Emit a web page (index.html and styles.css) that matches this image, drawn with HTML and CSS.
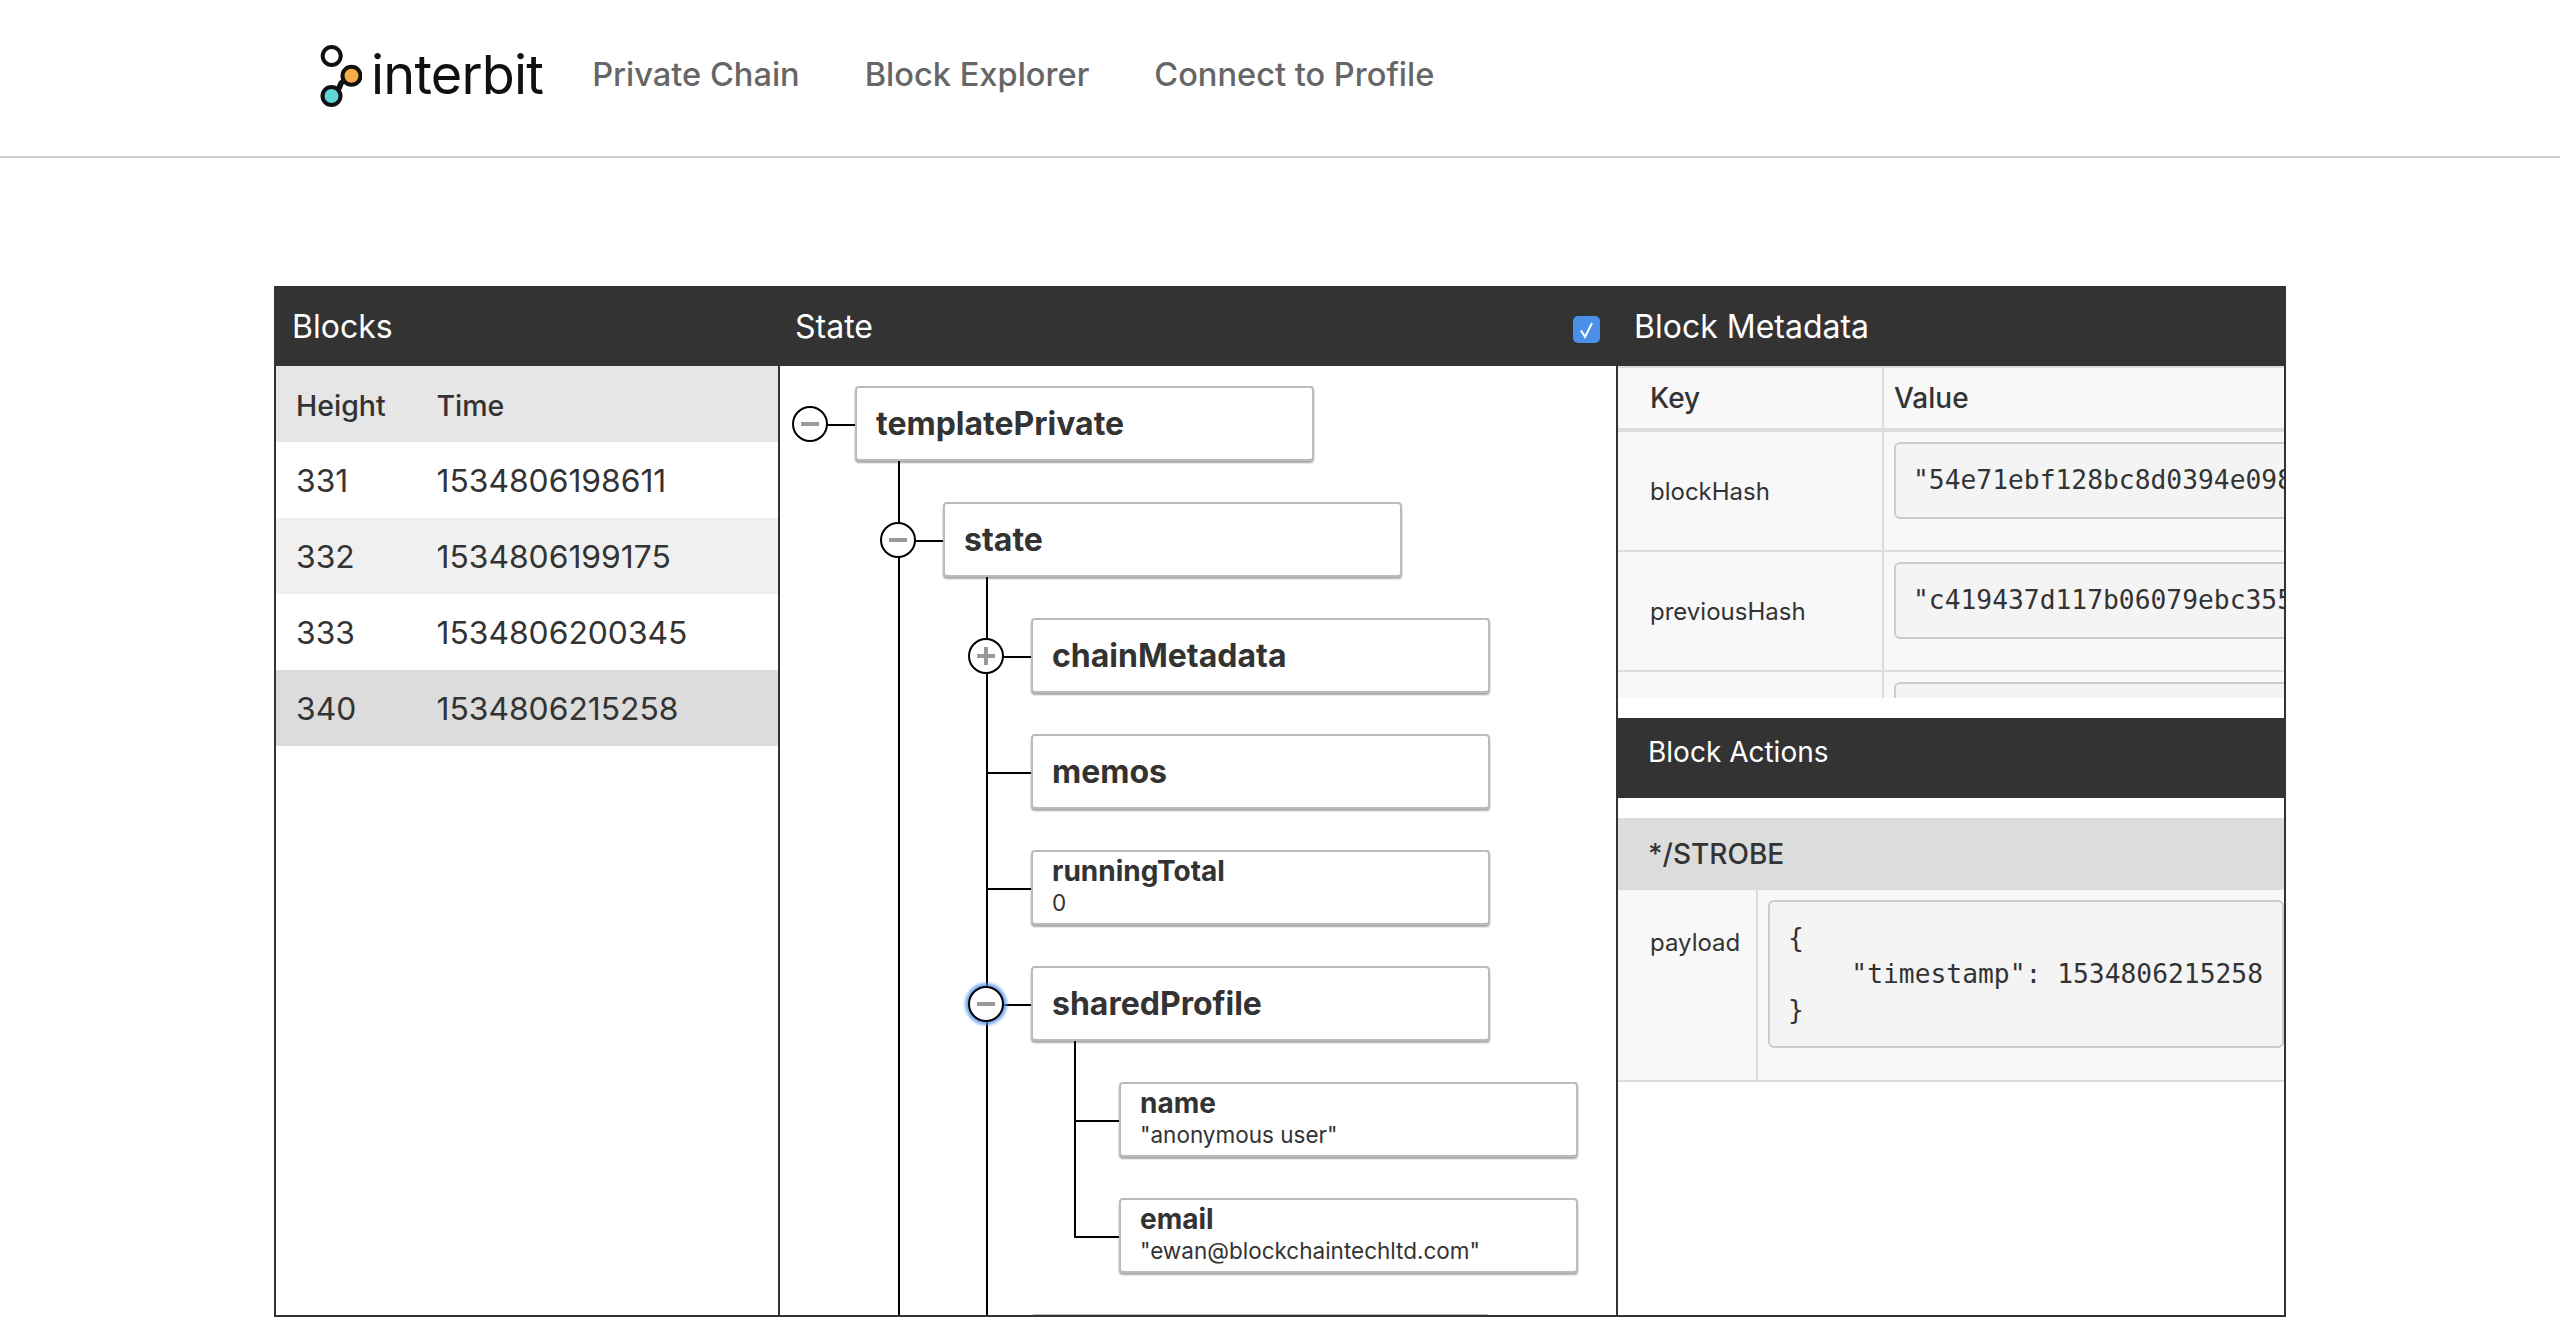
FILE: index.html
```html
<!DOCTYPE html>
<html lang="en">
<head>
<meta charset="utf-8">
<title>Interbit Block Explorer</title>
<link rel="stylesheet" href="styles.css">
</head>
<body>
<header class="topbar">
  <a class="logo">
    <svg class="logo-mark" width="44" height="68" viewBox="0 0 44 68" aria-hidden="true">
      <path d="M26 37 C20 39 24 44 18 47" fill="none" stroke="#111" stroke-width="5.5"/>
      <circle cx="13.7" cy="12" r="9" fill="#fff" stroke="#111" stroke-width="4"/>
      <circle cx="33.5" cy="31.8" r="9" fill="#f5ae45" stroke="#111" stroke-width="4"/>
      <circle cx="13.5" cy="52" r="9" fill="#5fd5d6" stroke="#111" stroke-width="4"/>
    </svg>
    <span class="logo-word">interbit</span>
  </a>
  <nav class="nav">
    <a class="nav-link">Private Chain</a>
    <a class="nav-link">Block Explorer</a>
    <a class="nav-link">Connect to Profile</a>
  </nav>
</header>

<main class="panel">
  <section class="col col-blocks">
    <h2 class="col-title">Blocks</h2>
    <div class="blocks">
      <div class="block-row block-head"><span>Height</span><span>Time</span></div>
      <div class="block-row"><span>331</span><span>1534806198611</span></div>
      <div class="block-row block-alt"><span>332</span><span>1534806199175</span></div>
      <div class="block-row"><span>333</span><span>1534806200345</span></div>
      <div class="block-row block-selected"><span>340</span><span>1534806215258</span></div>
    </div>
  </section>

  <section class="col col-state">
    <div class="col-title state-title">
      <h2 class="title-text">State</h2>
      <span class="checkbox">
        <svg width="27" height="27" viewBox="0 0 27 27" aria-hidden="true"><path d="M8 14.5 L12 21 L19 7" fill="none" stroke="#fff" stroke-width="2"/></svg>
      </span>
    </div>
    <div class="tree">
      <div class="branch">
        <div class="node"><span class="toggle minus"></span><b class="node-name">templatePrivate</b></div>
        <div class="children open-end">
          <div class="branch">
            <div class="node"><span class="toggle minus"></span><b class="node-name">state</b></div>
            <div class="children open-end">
              <div class="branch">
                <div class="node"><span class="toggle plus"></span><b class="node-name">chainMetadata</b></div>
              </div>
              <div class="branch">
                <div class="node"><b class="node-name">memos</b></div>
              </div>
              <div class="branch">
                <div class="node node-leaf"><b class="leaf-name">runningTotal</b><span class="leaf-value">0</span></div>
              </div>
              <div class="branch">
                <div class="node"><span class="toggle minus focused"></span><b class="node-name">sharedProfile</b></div>
                <div class="children">
                  <div class="branch">
                    <div class="node node-leaf"><b class="leaf-name">name</b><span class="leaf-value">"anonymous user"</span></div>
                  </div>
                  <div class="branch">
                    <div class="node node-leaf"><b class="leaf-name">email</b><span class="leaf-value">"ewan@blockchaintechltd.com"</span></div>
                  </div>
                </div>
              </div>
              <div class="branch">
                <div class="node"></div>
              </div>
            </div>
          </div>
        </div>
      </div>
    </div>
  </section>

  <section class="col col-meta">
    <h2 class="col-title">Block Metadata</h2>
    <div class="meta-scroll">
      <div class="meta-row meta-head"><div class="meta-key">Key</div><div class="meta-val">Value</div></div>
      <div class="meta-row"><div class="meta-key">blockHash</div><div class="meta-val"><div class="code code-line">"54e71ebf128bc8d0394e098</div></div></div>
      <div class="meta-row"><div class="meta-key">previousHash</div><div class="meta-val"><div class="code code-line">"c419437d117b06079ebc355</div></div></div>
      <div class="meta-row"><div class="meta-key"></div><div class="meta-val"><div class="code code-line"></div></div></div>
    </div>
    <h2 class="actions-title">Block Actions</h2>
    <div class="action-name">*/STROBE</div>
    <div class="action-row">
      <div class="action-key">payload</div>
      <div class="action-val"><pre class="code code-block">{
    "timestamp": 1534806215258
}</pre></div>
    </div>
  </section>
</main>
</body>
</html>
```

FILE: styles.css
```css
* { box-sizing: border-box; }
html, body { margin: 0; padding: 0; height: 1318px; overflow: hidden; background: #fff; }
body { font-family: Inter, "Noto Sans", sans-serif; color: #333; }
h2 { margin: 0; font-weight: 400; }

.topbar {
  height: 158px;
  border-bottom: 2px solid #ccc;
  display: flex;
  align-items: center;
  padding-left: 318px;
}
.logo { display: flex; align-items: center; }
.logo-mark { display: block; }
.logo-word {
  font-size: 54px;
  letter-spacing: -0.8px;
  color: #111;
  margin-left: 9px;
  margin-top: -6px;
  line-height: 68px;
}
.nav { display: flex; gap: 65px; margin-left: 49px; margin-top: -8px; }
.nav-link { font-size: 32.6px; font-weight: 500; color: #666; }

.panel {
  width: 2012px;
  height: 1031px;
  margin: 128px 0 0 274px;
  border: 2px solid #333;
  display: grid;
  grid-template-columns: 504px 838px 666px;
  overflow: hidden;
}
.col { display: flex; flex-direction: column; min-width: 0; height: 1027px; overflow: hidden; }
.col-title {
  flex: none;
  height: 78px;
  background: #333;
  color: #fff;
  font-size: 32px;
  line-height: 77px;
  padding-left: 16px;
}
.col-blocks .blocks, .tree { flex: 1; }
.blocks { border-right: 2px solid #333; }
.block-row {
  display: grid;
  grid-template-columns: 140.5px 1fr;
  height: 76px;
  padding-left: 20px;
  align-items: center;
  font-size: 31.8px;
}
.block-head { background: #e6e6e6; font-size: 28.5px; font-weight: 500; padding-top: 3px; }
.block-alt { background: #f0f0f0; }
.block-selected { background: #dcdcdc; }

.state-title { display: flex; justify-content: space-between; padding: 0 18px 0 15px; }
.title-text { font-size: 32px; }
.checkbox {
  width: 27px; height: 27px;
  margin-top: 28px;
  background: #4a90e9;
  border-radius: 5px;
}
.checkbox svg { display: block; }

.tree { padding: 20px 0 0 75px; border-right: 2px solid #333; overflow: hidden; }
.branch { position: relative; }
.branch + .branch { margin-top: 41px; }
.children { position: relative; margin: 41px 0 0 88px; }
.children::before {
  content: "";
  position: absolute;
  left: -45px;
  top: -41px;
  bottom: 37px;
  width: 2px;
  background: #000;
}
.children.open-end::before { bottom: -600px; }
.node {
  position: relative;
  width: 459px;
  height: 75px;
  background: #fff;
  border: 2px solid #bbb;
  border-radius: 4px;
  box-shadow: 0 2px 2px rgba(0, 0, 0, .35);
  padding-left: 19px;
  display: flex;
  flex-direction: column;
  justify-content: center;
  z-index: 1;
}
.children > .branch > .node::before,
.tree > .branch > .node::before {
  content: "";
  position: absolute;
  left: -47px;
  top: 36px;
  width: 45px;
  height: 2px;
  background: #000;
}
.node-name { font-size: 32px; font-weight: 700; color: #333; }
.leaf-name { font-size: 28px; font-weight: 700; line-height: 34px; margin-top: -3px; color: #333; }
.leaf-value { font-size: 22.5px; line-height: 30px; color: #333; }

.toggle {
  position: absolute;
  left: -65px;
  top: 18px;
  width: 36px;
  height: 36px;
  border: 2px solid #000;
  border-radius: 50%;
  background: #fff;
  z-index: 2;
}
.toggle::before {
  content: "";
  position: absolute;
  left: 7px;
  top: 14px;
  width: 18px;
  height: 4px;
  background: #999;
}
.plus::after {
  content: "";
  position: absolute;
  left: 14px;
  top: 7px;
  width: 4px;
  height: 18px;
  background: #999;
}
.focused { box-shadow: 0 0 3px 3px rgba(74, 144, 233, .75); }

.col-meta { background: #fff; }
.meta-scroll { flex: none; height: 332px; overflow: hidden; background: #fff; }
.meta-row {
  display: grid;
  grid-template-columns: 266px 1fr;
  height: 120px;
  border-bottom: 2px solid #ddd;
  background: #f8f8f8;
}
.meta-head {
  height: 66px;
  border-top: 2px solid #ddd;
  border-bottom: 4px solid #ddd;
  font-size: 28px;
  font-weight: 500;
}
.meta-key {
  border-right: 2px solid #ddd;
  padding: 0 0 0 32px;
  font-size: 24px;
  display: flex;
  align-items: center;
}
.meta-head .meta-key { font-size: 28px; }
.meta-val { padding: 10px 0 0 10px; min-width: 0; overflow: hidden; }
.meta-head .meta-val { padding: 0 0 0 10px; display: flex; align-items: center; }
.code {
  font-family: "DejaVu Sans Mono", "Liberation Mono", monospace;
  font-size: 26.3px;
  color: #333;
  background: #f4f4f4;
  border: 2px solid #ccc;
  border-right: 0;
  border-radius: 6px 0 0 6px;
  margin: 0;
}
.code-line { height: 77px; line-height: 73px; padding: 0 0 0 17px; white-space: nowrap; overflow: hidden; }
.code-block { height: 148px; line-height: 36px; padding: 18px 0 0 18px; border-right: 2px solid #ccc; border-radius: 6px; }

.actions-title {
  flex: none;
  margin-top: 20px;
  height: 80px;
  background: #333;
  color: #fff;
  font-size: 28px;
  line-height: 69px;
  padding-left: 30px;
}
.action-name {
  flex: none;
  margin-top: 20px;
  height: 72px;
  background: #dcdcdc;
  font-size: 28px;
  font-weight: 500;
  line-height: 72px;
  padding-left: 30px;
}
.action-row {
  flex: none;
  display: grid;
  grid-template-columns: 140px 1fr;
  height: 192px;
  border-bottom: 2px solid #ddd;
  background: #f8f8f8;
}
.action-key {
  border-right: 2px solid #ddd;
  padding: 36px 0 0 32px;
  font-size: 24px;
  line-height: 34px;
}
.action-val { padding: 10px 0 0 10px; }
```
